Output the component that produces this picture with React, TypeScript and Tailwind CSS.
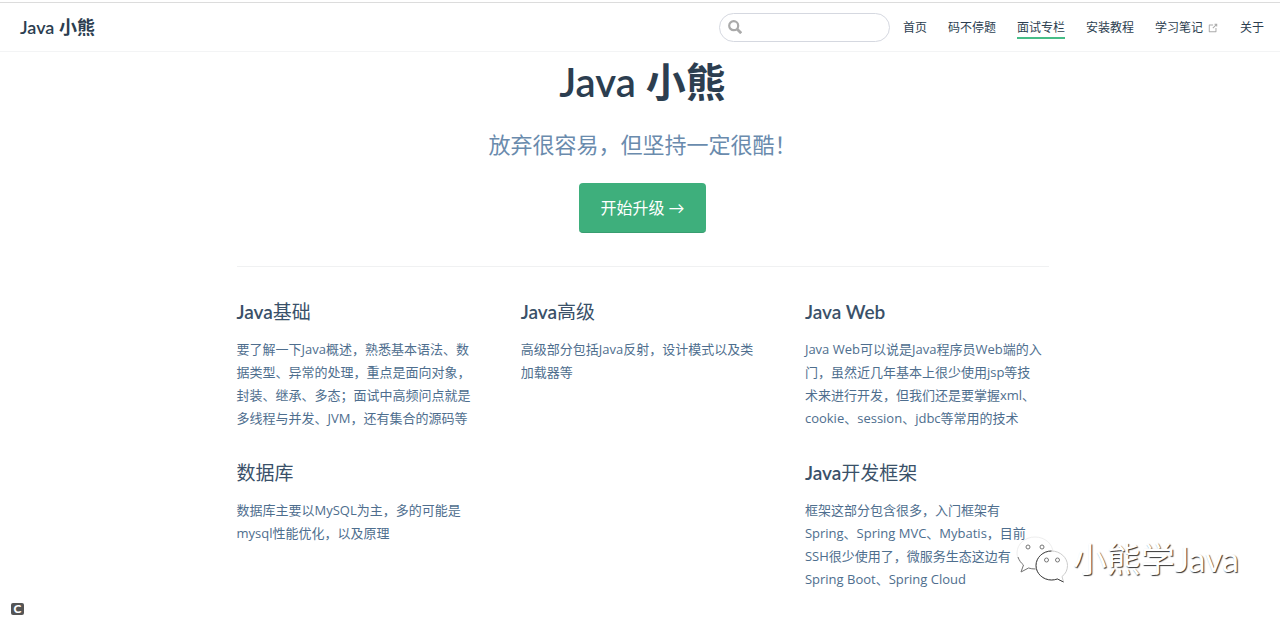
import React from 'react';
import clsx from 'clsx';

interface NavItem {
  text: string;
  active?: boolean;
  external?: boolean;
}

interface Feature {
  prefix?: string;
  title: string;
  details: string;
}

const navItems: NavItem[] = [
  { text: '首页' },
  { text: '码不停题' },
  { text: '面试专栏', active: true },
  { text: '安装教程' },
  { text: '学习笔记', external: true },
  { text: '关于' },
];

const featureRows: Feature[][] = [
  [
    {
      prefix: 'Java',
      title: '基础',
      details:
        '要了解一下Java概述，熟悉基本语法、数\n据类型、异常的处理，重点是面向对象，\n封装、继承、多态；面试中高频问点就是\n多线程与并发、JVM，还有集合的源码等',
    },
    {
      prefix: 'Java',
      title: '高级',
      details: '高级部分包括Java反射，设计模式以及类\n加载器等',
    },
    {
      prefix: 'Java Web',
      title: '',
      details:
        'Java Web可以说是Java程序员Web端的入\n门，虽然近几年基本上很少使用jsp等技\n术来进行开发，但我们还是要掌握xml、\ncookie、session、jdbc等常用的技术',
    },
  ],
  [
    {
      title: '数据库',
      details: '数据库主要以MySQL为主，多的可能是\nmysql性能优化，以及原理',
    },
    {
      prefix: 'Java',
      title: '开发框架',
      details:
        '框架这部分包含很多，入门框架有\nSpring、Spring MVC、Mybatis，目前\nSSH很少使用了，微服务生态这边有\nSpring Boot、Spring Cloud',
    },
  ],
];

const SearchIcon = () => (
  <svg viewBox="0 0 14 14" className="h-3.5 w-3.5 shrink-0" fill="none" stroke="#aaa" strokeWidth="2.2">
    <circle cx="5.7" cy="5.7" r="4.5" />
    <path d="M9 9l4.2 4.2" strokeWidth="2.8" />
  </svg>
);

const OutboundIcon = () => (
  <svg viewBox="0 0 100 100" className="h-3 w-3" fill="#aaa" aria-hidden="true">
    <path d="M18.8,85.1h56c2.200,0,4-1.800,4-4v-32h-8v28h-48v-48h28v-8h-32c-2.200,0-4,1.800-4,4v56C14.800,83.300,16.600,85.100,18.800,85.100z" />
    <polygon points="45.7,48.7 51.3,54.3 77.2,28.5 77.2,37.2 85.2,37.2 85.2,14.9 62.8,14.9 62.8,22.9 71.5,22.9" />
  </svg>
);

const Navbar = () => (
  <header className="flex h-[49px] items-center justify-between border-b border-[#f3f4f5] pl-5 pr-4">
    <a href="#" className="text-lg font-semibold text-[#2c3e50]">
      Java <span className="font-bold">小熊</span>
    </a>
    <div className="flex items-center">
      <label className="mr-[13px] flex h-[29px] w-[171px] items-center rounded-full border border-[#d5d8e0] pl-2">
        <SearchIcon />
        <input type="text" aria-label="Search" className="ml-2 w-full min-w-0 bg-transparent text-xs outline-none" />
      </label>
      <nav className="flex items-center gap-[21px] text-xs text-[#2c3e50]">
        {navItems.map((item) => (
          <a
            key={item.text}
            href="#"
            className={clsx(
              'flex items-center border-b-2 border-transparent pt-1 leading-[18px]',
              item.active && 'border-b-[#46bd87]',
            )}
          >
            {item.text}
            {item.external && (
              <span className="ml-1">
                <OutboundIcon />
              </span>
            )}
          </a>
        ))}
      </nav>
    </div>
  </header>
);

const Hero = () => (
  <section className="flex flex-col items-center pt-1">
    <h1 className="text-[40px] font-semibold leading-[52px] text-[#2c3e50]">
      Java <span className="font-bold">小熊</span>
    </h1>
    <p className="mt-[22px] text-[22px] leading-[30px] text-[#6a8bad]">放弃很容易，但坚持一定很酷！</p>
    <a
      href="#"
      className="mt-[23px] flex h-[50px] items-center rounded border-b border-[#389d70] bg-[#3eaf7c] px-[21px] text-base text-white"
    >
      开始升级 →
    </a>
  </section>
);

const FeatureCard = ({ prefix, title, details }: Feature) => (
  <div className="w-[30%]">
    <h2 className="text-[19px] leading-[25px] text-[#3a5169]">
      {prefix && <span className="font-semibold">{prefix}</span>}
      {title}
    </h2>
    <p className="mt-3.5 whitespace-pre font-['Open_Sans','Noto_Sans_CJK_SC',sans-serif] text-[13px] leading-[23px] text-[#4e6e8e]">
      {details}
    </p>
  </div>
);

const WechatIcon = () => (
  <svg viewBox="0 0 54 48" className="h-12 w-[54px]" aria-hidden="true">
    <g fill="#fff" strokeWidth="1">
      <path
        d="M20 2C10 2 2 9 2 18c0 5 2.500 9 6.500 12L6 37l7.500-4c2 .7 4.500 1 6.500 1 10 0 18-7 18-16S30 2 20 2z"
        stroke="#eee"
      />
      <path d="M3 22c1 3 3 6 5.500 8L6 37l7.500-4c2 .7 4.500 1 7 1" fill="none" stroke="#777" />
      <circle cx="13" cy="12" r="2" stroke="#777" />
      <circle cx="27" cy="12" r="2" stroke="#777" />
      <path
        d="M36.500 16C28 16 21 22.500 21 30.500S28 45 36.500 45c2 0 4-.4 6-1l6 3-1.500-5.500c3.500-2.500 5.500-6.500 5.500-11C52.500 22.500 45 16 36.500 16z"
        stroke="#ccc"
      />
      <path d="M36.500 16C28 16 21 22.500 21 30.500S28 45 36.500 45c2 0 4-.4 6-1l6 3" fill="none" stroke="#444" />
      <circle cx="31.500" cy="25" r="2" stroke="#777" />
      <circle cx="42.500" cy="25" r="2" stroke="#777" />
    </g>
  </svg>
);

const App = () => {
  return (
    <div className="relative min-h-screen bg-white pt-[2px] font-[Lato,'Noto_Sans_CJK_SC',sans-serif]">
      <div className="h-px bg-[#dcdcdc]" />
      <Navbar />
      <main className="mx-auto w-full max-w-[817px] pl-[5px]">
        <Hero />
        <div className="mt-[33px] flex flex-col gap-[30px] border-t border-[#f0f1f2] pt-8">
          {featureRows.map((row) => (
            <div key={row[0].title} className="flex justify-between">
              {row.map((feature) => (
                <FeatureCard key={feature.title} {...feature} />
              ))}
            </div>
          ))}
        </div>
      </main>

      {/* Account watermark in the corner */}
      <div className="absolute bottom-[35px] right-[41px] flex items-center gap-1">
        <WechatIcon />
        <span className="text-[34px] leading-[48px] text-white [text-shadow:1px_1px_1px_#333]">
          小熊学Java
        </span>
      </div>

      <span className="absolute bottom-[3px] left-[11px] flex h-3 w-[13px] items-center justify-center rounded-xs bg-[#555] text-xs font-black leading-none text-white">
        C
      </span>
    </div>
  );
};

export default App;
